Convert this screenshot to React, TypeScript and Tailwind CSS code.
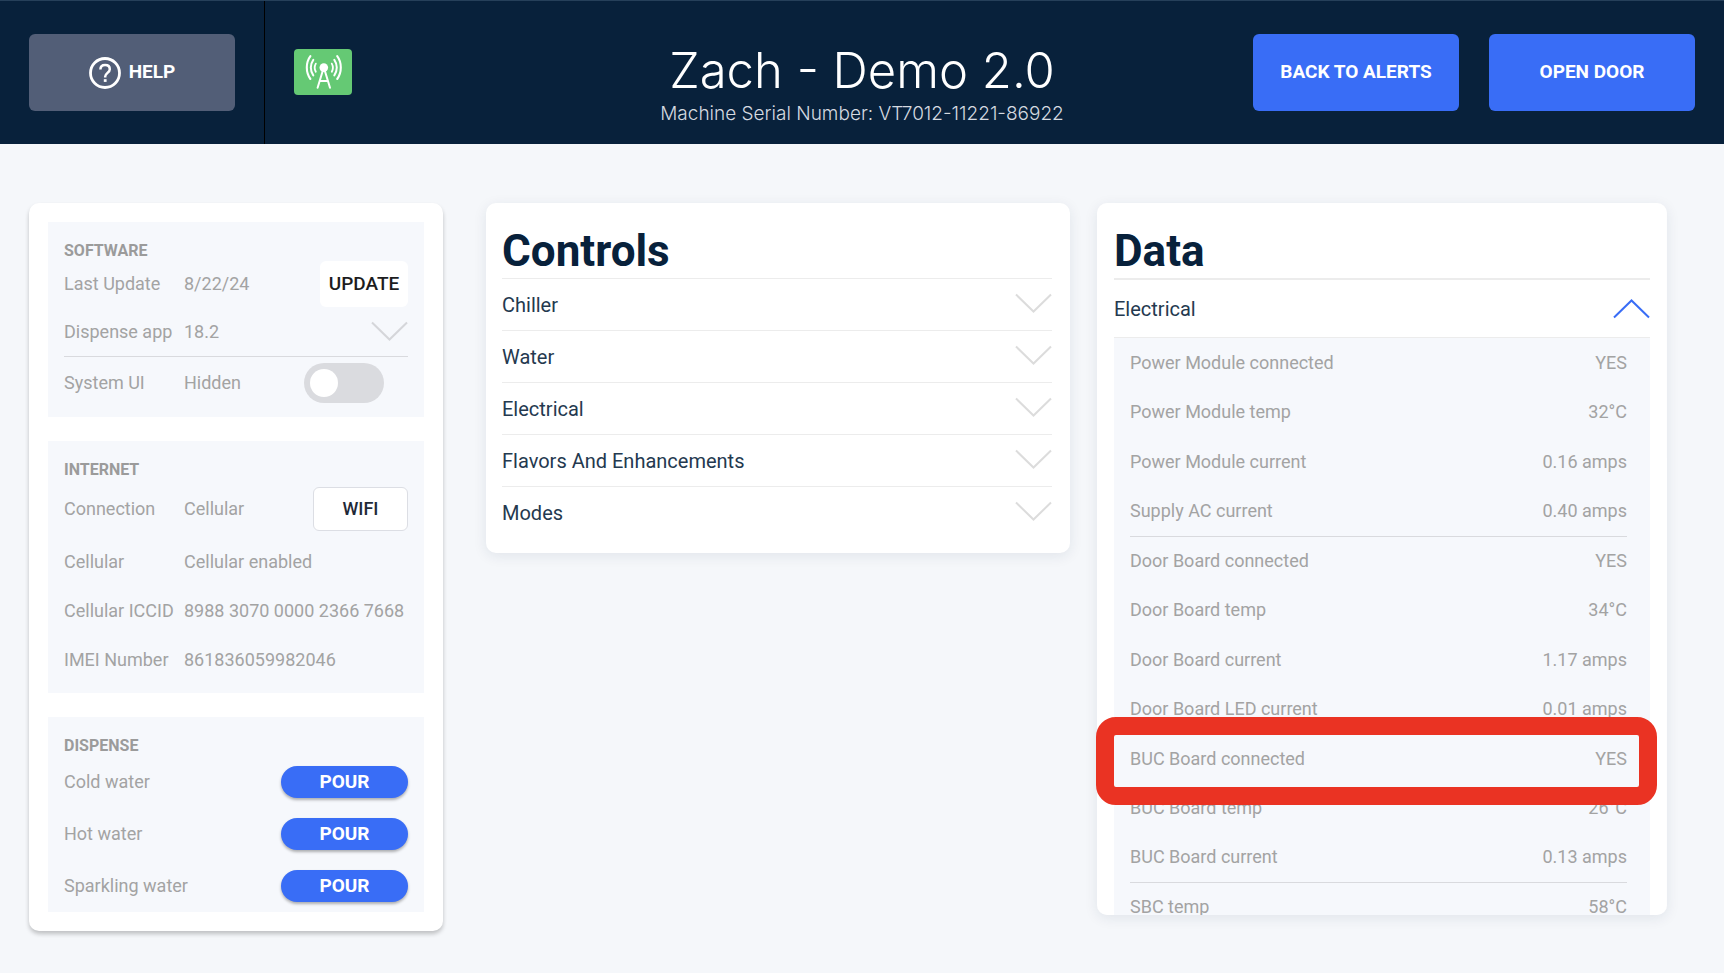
import type { ReactNode } from 'react';

const readings: { label: string; value: string }[][] = [
  [
    { label: 'Power Module connected', value: 'YES' },
    { label: 'Power Module temp', value: '32°C' },
    { label: 'Power Module current', value: '0.16 amps' },
    { label: 'Supply AC current', value: '0.40 amps' },
  ],
  [
    { label: 'Door Board connected', value: 'YES' },
    { label: 'Door Board temp', value: '34°C' },
    { label: 'Door Board current', value: '1.17 amps' },
    { label: 'Door Board LED current', value: '0.01 amps' },
    { label: 'BUC Board connected', value: 'YES' },
    { label: 'BUC Board temp', value: '26°C' },
    { label: 'BUC Board current', value: '0.13 amps' },
  ],
  [{ label: 'SBC temp', value: '58°C' }],
];

const controls = ['Chiller', 'Water', 'Electrical', 'Flavors And Enhancements', 'Modes'];
const drinks = ['Cold water', 'Hot water', 'Sparkling water'];

function Chevron({ className }: { className: string }) {
  return (
    <svg viewBox="0 0 37 20" className={className} fill="none" stroke="currentColor" strokeWidth="2" aria-hidden="true">
      <path d="M1 1.5 18.5 18.5 36 1.5" />
    </svg>
  );
}

function HelpIcon() {
  return (
    <svg viewBox="0 0 32 32" className="size-8" fill="none" stroke="currentColor" aria-hidden="true">
      <circle cx="16" cy="16" r="14.5" strokeWidth="2.8" />
      <path d="M11.4 12.6c0-3 1.9-4.6 4.7-4.6s4.7 1.6 4.7 4.2c0 3.5-4.6 3.9-4.6 7.4v.8" strokeWidth="2.5" />
      <path d="M16.2 22.2v2.7" strokeWidth="2.8" />
    </svg>
  );
}

function AntennaIcon() {
  return (
    <svg viewBox="0 0 58 46" className="h-[46px] w-[58px]" fill="none" stroke="currentColor" strokeLinecap="round" aria-hidden="true">
      <circle cx="29.8" cy="18.6" r="4.3" fill="currentColor" stroke="none" />
      <path d="M29 21 23.6 38.8M30.6 21 36 38.8M25.8 32h8" strokeWidth="2" />
      <path d="M21.8 14.6c-1.3 2.4-1.3 5.8 0 8.2M37.8 14.6c1.3 2.4 1.3 5.8 0 8.2" strokeWidth="1.8" />
      <path d="M19.3 10.8c-3.3 4.6-3.3 11 0 15.6M40.3 10.8c3.3 4.6 3.3 11 0 15.6" strokeWidth="2" />
      <path d="M16.4 7.2c-4.8 6.4-4.8 16.4 0 22.8M43.2 7.2c4.8 6.4 4.8 16.4 0 22.8" strokeWidth="2.1" />
    </svg>
  );
}

function Panel({ title, children }: { title: string; children: ReactNode }) {
  return (
    <section className="bg-[#f6f8fc] px-4 pt-[19px]">
      <h2 className="text-base leading-5 font-bold text-[#9b9b9b]">{title}</h2>
      {children}
    </section>
  );
}

function Field({ label, value, className }: { label: string; value: string; className: string }) {
  return (
    <div className={`grid grid-cols-[120px_1fr] items-center ${className}`}>
      <dt>{label}</dt>
      <dd>{value}</dd>
    </div>
  );
}

export default function App() {
  return (
    <div className="min-h-screen bg-white font-['Roboto',sans-serif] text-[#a3a3a3]">
      <header className="grid h-36 grid-cols-[1fr_auto_1fr] border-t border-[#26405a] bg-[#08213b] text-white">
        <div className="flex">
          <div className="flex items-center border-r border-black px-[29px]">
            <button type="button" className="flex h-[77px] w-[206px] items-center justify-center gap-2 rounded-md bg-[#525e77] text-[19px] font-bold">
              <HelpIcon />
              HELP
            </button>
          </div>
          <div className="flex items-center pb-0.5 pl-[29px]">
            <span className="rounded bg-[#65c974]" role="img" aria-label="Cellular signal">
              <AntennaIcon />
            </span>
          </div>
        </div>
        <div className="pt-[43px] text-center font-['Inter',sans-serif]">
          <h1 className="text-[49px] leading-[54px] font-light">Zach - Demo 2.0</h1>
          <p className="text-[19px] leading-8 font-light text-[#d5dae0]">Machine Serial Number: VT7012-11221-86922</p>
        </div>
        <div className="flex items-center justify-end gap-[30px] pr-[29px]">
          <button type="button" className="h-[77px] w-[206px] rounded-md bg-[#396df6] text-[19px] font-bold">BACK TO ALERTS</button>
          <button type="button" className="h-[77px] w-[206px] rounded-md bg-[#396df6] text-[19px] font-bold">OPEN DOOR</button>
        </div>
      </header>

      <main className="grid grid-cols-[414fr_1181fr] items-start gap-[43px] bg-[#f5f7fa] pt-[59px] pr-[57px] pb-[42px] pl-[29px]">
        <div className="flex flex-col gap-6 rounded-[10px] bg-white p-[19px] text-lg shadow-[0_3px_4px_rgba(0,0,0,0.22)]">
          <Panel title="SOFTWARE">
            <div className="flex items-center justify-between">
              <dl className="flex-1">
                <Field label="Last Update" value="8/22/24" className="h-[46px]" />
              </dl>
              <button type="button" className="h-[46px] w-[88px] rounded-md bg-white text-[19px] font-medium text-[#1c1c1e]">UPDATE</button>
            </div>
            <div className="relative grid h-[50px] grid-cols-[120px_1fr] items-center border-b border-[#d9dade]">
              <label htmlFor="dispense-app">Dispense app</label>
              <select id="dispense-app" className="appearance-none bg-transparent">
                <option>18.2</option>
              </select>
              <Chevron className="pointer-events-none absolute top-3.5 right-0 h-5 w-[37px] text-[#d5d6da]" />
            </div>
            <div className="grid h-[60px] grid-cols-[120px_1fr_80px] items-center pr-6 pb-2">
              <label htmlFor="system-ui">System UI</label>
              <span>Hidden</span>
              <input
                id="system-ui"
                type="checkbox"
                role="switch"
                className="flex h-10 w-20 appearance-none items-center rounded-full bg-[#dadbdf] px-1.5 before:size-7 before:rounded-full before:bg-white before:content-[''] checked:justify-end checked:bg-[#396df6]"
              />
            </div>
          </Panel>

          <Panel title="INTERNET">
            <div className="flex items-center justify-between pt-[7px]">
              <dl className="flex-1">
                <Field label="Connection" value="Cellular" className="h-11" />
              </dl>
              <button type="button" className="h-11 w-[95px] rounded-md border border-[#dcdee4] bg-white text-lg font-medium text-[#1f2937]">WIFI</button>
            </div>
            <dl className="pt-1.5 pb-[9px]">
              <Field label="Cellular" value="Cellular enabled" className="h-[49px]" />
              <Field label="Cellular ICCID" value="8988 3070 0000 2366 7668" className="h-[49px]" />
              <Field label="IMEI Number" value="861836059982046" className="h-[49px]" />
            </dl>
          </Panel>

          <Panel title="DISPENSE">
            <ul>
              {drinks.map((drink) => (
                <li key={drink} className="flex h-[52px] items-center justify-between">
                  {drink}
                  <button
                    type="button"
                    aria-label={`Pour ${drink}`}
                    className="h-8 w-[127px] rounded-full bg-[#396df6] text-[19px] leading-8 font-bold text-white shadow-[0_2px_3px_rgba(0,0,0,0.3)]"
                  >
                    POUR
                  </button>
                </li>
              ))}
            </ul>
          </Panel>
        </div>

        <div className="grid grid-cols-[584fr_570fr] items-start gap-[27px]">
          <section className="rounded-[10px] bg-white pt-[23px] pr-[18px] pb-[15px] pl-4 shadow-[0_3px_14px_rgba(20,40,80,0.09)]">
            <h2 className="pb-0.5 text-[44px] leading-[50px] font-bold text-[#08213b]">Controls</h2>
            {controls.map((name) => (
              <button
                key={name}
                type="button"
                aria-expanded="false"
                className="flex h-[52px] w-full items-center justify-between border-t border-[#ececec] text-xl text-[#24394f]"
              >
                {name}
                <Chevron className="mb-1 h-5 w-[37px] text-[#dcdcdc]" />
              </button>
            ))}
          </section>

          <div className="relative">
            <section className="h-[712px] overflow-y-auto rounded-[10px] bg-white px-[17px] pt-[23px] shadow-[0_3px_14px_rgba(20,40,80,0.09)] [scrollbar-width:none]">
              <h2 className="pb-0.5 text-[44px] leading-[50px] font-bold text-[#08213b]">Data</h2>
              <button
                type="button"
                aria-expanded="true"
                className="flex h-[60px] w-full items-center justify-between border-t-2 border-b border-[#ececec] text-xl text-[#24394f]"
              >
                Electrical
                <Chevron className="h-5 w-[37px] rotate-180 text-[#396df6]" />
              </button>
              <div className="bg-[#f6f8fc] pr-[23px] pb-4 pl-4">
                <table className="w-full border-collapse text-lg">
                  {readings.map((group) => (
                    <tbody key={group[0].label} className="border-b border-[#d9dade] last:border-b-0">
                      {group.map((row) => (
                        <tr key={row.label} className="h-[49px] even:h-[50px]">
                          <th scope="row" className="text-left font-normal">{row.label}</th>
                          <td className="text-right">{row.value}</td>
                        </tr>
                      ))}
                    </tbody>
                  ))}
                </table>
              </div>
            </section>
            <div className="pointer-events-none absolute top-[514px] right-2.5 -left-px h-[88px] rounded-[20px] border-[18px] border-[#ea3323]" />
          </div>
        </div>
      </main>
    </div>
  );
}
